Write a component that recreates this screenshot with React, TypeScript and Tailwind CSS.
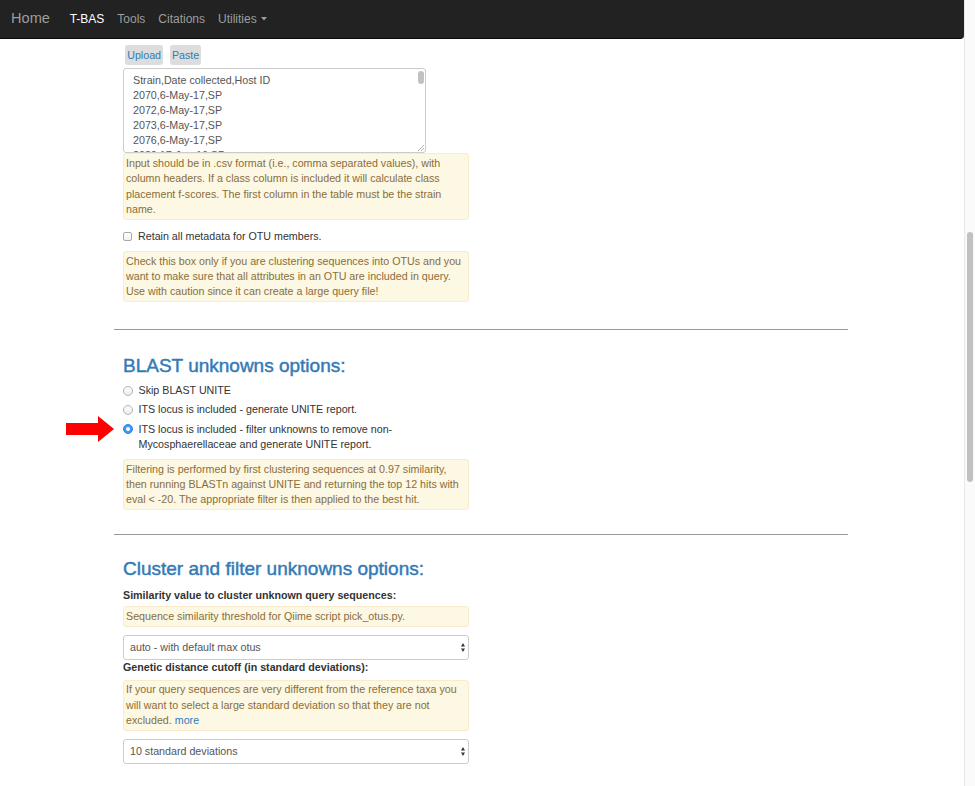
import React from 'react';

const Note: React.FC<{ lines: React.ReactNode[]; className?: string }> = ({ lines, className = '' }) => (
  <div className={`w-[346px] rounded-[3px] border border-[#faebcc] bg-[#fcf8e3] px-[2px] py-[1.8px] text-[#8a6d3b] leading-[15.2px] ${className}`}>
    {lines.map((l, i) => (
      <div key={i} className="whitespace-nowrap">{l}</div>
    ))}
  </div>
);

const Radio: React.FC<{ checked?: boolean }> = ({ checked }) =>
  checked ? (
    <span className="mt-[2.6px] flex h-[10px] w-[10px] shrink-0 items-center justify-center rounded-full bg-[#3b99fc] border border-[#2f86e6]">
      <span className="h-[3.5px] w-[3.5px] rounded-full bg-white" />
    </span>
  ) : (
    <span className="mt-[2.6px] h-[10px] w-[10px] shrink-0 rounded-full border border-[#b3b3b3] bg-gradient-to-b from-white to-[#ececec]" />
  );

const SelectBox: React.FC<{ value: string; className?: string }> = ({ value, className = '' }) => (
  <div className={`flex h-[25px] w-[346px] items-center justify-between rounded-[3px] border border-[#cccccc] bg-white pl-[6px] pr-[3px] text-[#555] ${className}`}>
    <span>{value}</span>
    <svg width="4" height="9" viewBox="0 0 4 9">
      <polygon points="0,3.5 2,0 4,3.5" fill="#333" />
      <polygon points="0,5.5 4,5.5 2,9" fill="#333" />
    </svg>
  </div>
);

const Heading: React.FC<{ children: React.ReactNode; className?: string }> = ({ children, className = '' }) => (
  <h3 className={`h-[22px] whitespace-nowrap text-[19px] leading-[22px] text-[#337ab7] [-webkit-text-stroke:0.45px_#337ab7] ${className}`}>
    {children}
  </h3>
);

export default function App() {
  return (
    <div className="flex h-[786px] overflow-hidden bg-white font-['Liberation_Sans',Arial,sans-serif] text-[10.7px] text-[#333]">
      <main className="flex-1">
        {/* navbar */}
        <nav className="flex h-[39px] items-center rounded-br-[4px] border-b border-[#080808] bg-[#222] pl-[11px] text-[12px] text-[#9d9d9d]">
          <span className="text-[14.6px]">Home</span>
          <span className="ml-[19.7px] text-white">T-BAS</span>
          <span className="ml-[13px]">Tools</span>
          <span className="ml-[13px]">Citations</span>
          <span className="ml-[13px] flex items-center">
            Utilities
            <svg className="ml-[4.5px]" width="6" height="3.5" viewBox="0 0 6 3.5">
              <polygon points="0,0 6,0 3,3.5" fill="#9d9d9d" />
            </svg>
          </span>
        </nav>

        <div className="ml-[114px] w-[734px]">
          <div className="pl-[9px]">
            {/* upload / paste */}
            <div className="mt-[6px] flex gap-[6.5px] pl-[2px]">
              <button className="flex h-[20px] items-center rounded-[3px] bg-[#dddddd] px-[2.2px] text-[#337ab7]">Upload</button>
              <button className="flex h-[20px] items-center rounded-[3px] bg-[#dddddd] px-[2.2px] text-[#337ab7]">Paste</button>
            </div>

            {/* textarea */}
            <div className="relative mt-[3.3px] h-[85px] w-[303px] overflow-hidden rounded-[3px] border border-[#cccccc] bg-white pl-[9px] pt-[3.5px] leading-[15px] text-[#555]">
              <div>Strain,Date collected,Host ID</div>
              <div>2070,6-May-17,SP</div>
              <div>2072,6-May-17,SP</div>
              <div>2073,6-May-17,SP</div>
              <div>2076,6-May-17,SP</div>
              <div>2080,17-Jun-16,SP</div>
              <span className="absolute right-[1.5px] top-[1.7px] h-[13px] w-[6px] rounded-full bg-[#c1c1c1]" />
              <svg className="absolute bottom-[1px] right-[1px]" width="7" height="7" viewBox="0 0 7 7">
                <line x1="7" y1="1" x2="1" y2="7" stroke="#999" strokeWidth="0.8" />
                <line x1="7" y1="4" x2="4" y2="7" stroke="#999" strokeWidth="0.8" />
              </svg>
            </div>

            <Note
              lines={[
                'Input should be in .csv format (i.e., comma separated values), with',
                'column headers. If a class column is included it will calculate class',
                'placement f-scores. The first column in the table must be the strain',
                'name.',
              ]}
            />

            <label className="mt-[9.2px] flex h-[15.2px] items-start leading-[15.2px]">
              <span className="mt-[3.1px] h-[9px] w-[9px] shrink-0 rounded-[2px] border border-[#a9a9a9] bg-gradient-to-b from-white to-[#f0f0f0]" />
              <span className="ml-[6px]">Retain all metadata for OTU members.</span>
            </label>

            <Note
              className="mt-[6.9px]"
              lines={[
                'Check this box only if you are clustering sequences into OTUs and you',
                'want to make sure that all attributes in an OTU are included in query.',
                'Use with caution since it can create a large query file!',
              ]}
            />
          </div>

          <hr className="mt-[27.1px] border-t border-[#999]" />

          <div className="pl-[9px]">
            <Heading className="mt-[24.4px]">BLAST unknowns options:</Heading>

            <div className="mt-[6.3px] flex flex-col gap-[4.1px] leading-[15.2px]">
              <div className="flex items-start">
                <Radio />
                <span className="ml-[5.5px]">Skip BLAST UNITE</span>
              </div>
              <div className="flex items-start">
                <Radio />
                <span className="ml-[5.5px]">ITS locus is included - generate UNITE report.</span>
              </div>
              <div className="relative flex items-start">
                <svg className="absolute left-[-57px] top-[-5.2px]" width="48" height="26" viewBox="0 0 48 26">
                  <rect x="0" y="7" width="33" height="12" fill="#f00" />
                  <polygon points="32,0 48,13 32,26" fill="#f00" />
                </svg>
                <Radio checked />
                <span className="ml-[5.5px]">
                  ITS locus is included - filter unknowns to remove non-
                  <br />
                  Mycosphaerellaceae and generate UNITE report.
                </span>
              </div>
            </div>

            <Note
              className="mt-[7.3px]"
              lines={[
                'Filtering is performed by first clustering sequences at 0.97 similarity,',
                'then running BLASTn against UNITE and returning the top 12 hits with',
                'eval < -20. The appropriate filter is then applied to the best hit.',
              ]}
            />
          </div>

          <hr className="mt-[23.1px] border-t border-[#999]" />

          <div className="pl-[9px]">
            <Heading className="mt-[23.7px]">Cluster and filter unknowns options:</Heading>

            <div className="mt-[7.4px] font-bold leading-[15.2px]">Similarity value to cluster unknown query sequences:</div>
            <Note className="mt-[3.1px]" lines={['Sequence similarity threshold for Qiime script pick_otus.py.']} />
            <SelectBox className="mt-[7.8px]" value="auto - with default max otus" />

            <div className="mt-[0.4px] font-bold leading-[15.2px]">Genetic distance cutoff (in standard deviations):</div>
            <Note
              className="mt-[4.4px]"
              lines={[
                'If your query sequences are very different from the reference taxa you',
                'will want to select a large standard deviation so that they are not',
                <>
                  excluded. <span className="text-[#337ab7]">more</span>
                </>,
              ]}
            />
            <SelectBox className="mt-[7.8px]" value="10 standard deviations" />
          </div>
        </div>
      </main>

      {/* page scrollbar */}
      <aside className="w-[11px] shrink-0 border-l border-[#e8e8e8] bg-[#fafafa] pt-[232px]">
        <div className="mx-auto h-[250px] w-[6px] rounded-full bg-[#c1c1c1]" />
      </aside>
    </div>
  );
}
